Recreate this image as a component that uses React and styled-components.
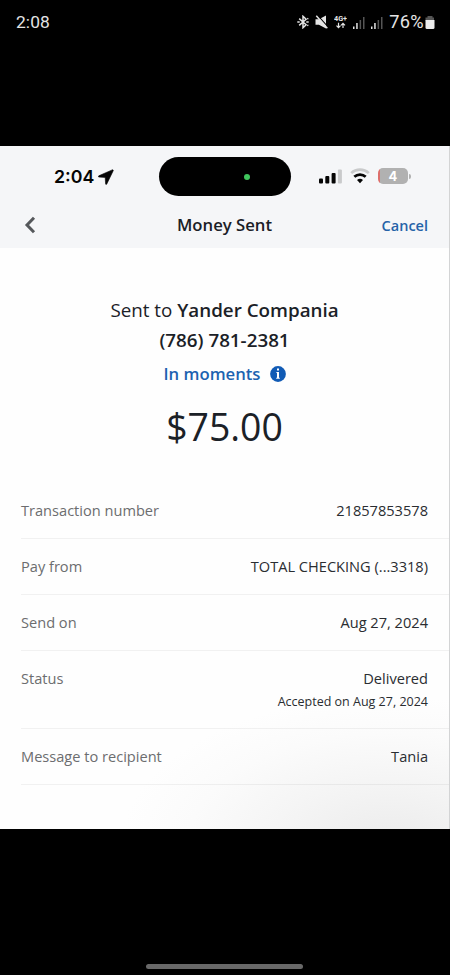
import React from 'react';
import styled, { createGlobalStyle } from 'styled-components';

const GlobalStyle = createGlobalStyle`
  * {
    box-sizing: border-box;
  }

  body {
    margin: 0;
    background: #000;
    font-family: 'Open Sans', 'Noto Sans', sans-serif;
  }
`

const Screen = styled.div`
  display: flex;
  flex-direction: column;
  width: 450px;
  height: 975px;
  overflow: hidden;
  background: #000;
`

const DeviceBar = styled.div`
  display: flex;
  justify-content: space-between;
  height: 146px;
  padding: 11px 15px 0 16px;
  color: #e4e4e4;
  font: 400 17px/22px Roboto, sans-serif;
`

const DeviceIcons = styled.div`
  display: flex;
  align-items: center;
  gap: 6px;
  height: 22px;

  svg {
    display: block;
    flex-shrink: 0;
  }
`

const DeviceTime = styled.span`
  font-size: 17.4px;
  letter-spacing: 0.1px;
`

const DevicePower = styled.div`
  display: flex;
  align-items: center;
  gap: 1px;
  font-size: 18.2px;
  letter-spacing: 0.3px;
`

const Panel = styled.div`
  display: flex;
  flex-direction: column;
  height: 683px;
  border-right: 1px solid #d3d4d5;
  background: radial-gradient(ellipse 270px 150px at 390px 700px, #ebebeb 0%, #f4f4f4 40%, #fbfbfb 75%, #fefefe 100%);
`

const Header = styled.div`
  height: 102px;
  background: #f5f6f8;
`

const PhoneBar = styled.div`
  display: grid;
  grid-template-columns: 159px 132px 1fr;
  padding-top: 11px;
  height: 51px;
`

const PhoneTime = styled.div`
  display: flex;
  align-items: center;
  gap: 4px;
  padding-left: 54px;
  color: #050505;
  font: 600 17.8px/38px Inter, sans-serif;
`

const Island = styled.div`
  display: flex;
  align-items: center;
  height: 39px;
  padding-left: 85px;
  border-radius: 20px;
  background: #000;
`

const CameraDot = styled.span`
  width: 6px;
  height: 6px;
  border-radius: 50%;
  background: #3fc45c;
`

const PhoneIcons = styled.div`
  display: flex;
  align-items: center;
  gap: 8px;
  height: 38px;
  padding-left: 28px;
`

const Battery = styled.div`
  display: flex;
  align-items: center;
`

const BatteryBody = styled.div`
  width: 30px;
  height: 16px;
  border-radius: 5px;
  background: linear-gradient(90deg, #dd6f6b 2px, #b1b1b1 2px);
  color: #fff;
  font: 700 13px/16px Inter, sans-serif;
  text-align: center;
`

const BatteryTip = styled.span`
  width: 2px;
  height: 5px;
  margin-left: 1px;
  border-radius: 0 2px 2px 0;
  background: #b1b1b1;
`

const NavBar = styled.div`
  display: grid;
  grid-template-columns: 1fr auto 1fr;
  align-items: center;
  height: 56px;
  padding: 0 21px 0 24px;
`

const Title = styled.div`
  margin-left: -3px;
  color: #1a2026;
  font-size: 16.7px;
  font-weight: 600;
  line-height: 24px;
`

const Cancel = styled.div`
  color: #2563a8;
  font-size: 14.5px;
  font-weight: 600;
  line-height: 25px;
  text-align: right;
`

const Hero = styled.div`
  display: flex;
  flex-direction: column;
  align-items: center;
  height: 235px;
  padding-top: 46.5px;
  color: #1b2127;
`

const Recipient = styled.div`
  font-size: 18.8px;
  font-weight: ${props => props.$bold ? 600 : 400};
  line-height: 30.5px;

  b {
    font-weight: 600;
  }
`

const Timing = styled.div`
  display: flex;
  align-items: center;
  gap: 9px;
  height: 36px;
  color: #1c62b0;
  font-size: 16.7px;
  font-weight: 600;
`

const Amount = styled.div`
  margin-top: 8.5px;
  font-size: 37.4px;
  line-height: 54px;
`

const Row = styled.div`
  display: flex;
  justify-content: space-between;
  height: ${props => props.$tall ? 78 : 56}px;
  margin-left: 21px;
  padding: 15px 21px 0 0;
  border-bottom: 1px solid rgba(0, 0, 0, 0.05);
  font-size: 14.6px;
  line-height: 24px;
`

const Label = styled.span`
  color: #6c6d6f;
`

const Value = styled.div`
  color: #2a2d31;
  text-align: right;
`

const Note = styled.div`
  font-size: 12.5px;
  line-height: 23px;
`

const HomeArea = styled.div`
  display: flex;
  flex: 1;
  justify-content: center;
  align-items: flex-end;
  padding: 0 1px 6px 0;
`

const HomeBar = styled.span`
  width: 157px;
  height: 5px;
  border-radius: 3px;
  background: #686868;
`

const details = [
  { label: 'Transaction number', value: '21857853578' },
  { label: 'Pay from', value: 'TOTAL CHECKING (...3318)' },
  { label: 'Send on', value: 'Aug 27, 2024' },
  { label: 'Status', value: 'Delivered', note: 'Accepted on Aug 27, 2024' },
  { label: 'Message to recipient', value: 'Tania' },
];

const BluetoothIcon = () => (
  <svg width="12" height="14" viewBox="0 0 12 14" fill="none" stroke="#e4e4e4" strokeWidth="1.5">
    <path d="M2.2 3.6l6.9 6.2L6 12.7V1.3l3.1 2.9-6.9 6.2" />
    <path d="M0.3 7h2.4M9.3 7h2.4M10.3 4l1-.7M10.3 10l1 .7" />
  </svg>
)

const MuteIcon = () => (
  <svg width="13" height="14" viewBox="0 0 13 14">
    <path d="M0.5 4.3h3.4L11 .6v12.8L3.9 9.7H.5z" fill="#e4e4e4" />
    <path d="M2.6 0.4l10.4 11.4" stroke="#000" strokeWidth="1.1" />
    <path d="M1.3 0.8l11 12.4" stroke="#e4e4e4" strokeWidth="1.5" />
  </svg>
)

const NetworkIcon = () => (
  <svg width="13" height="14" viewBox="0 0 13 14">
    <text x="0" y="6.4" fill="#e4e4e4" fontFamily="Roboto" fontSize="7.4" fontWeight="700" textLength="13" lengthAdjust="spacingAndGlyphs">4G+</text>
    <path d="M4.5 7.8v4.7M2.5 10.6l2 2 2-2M9 13V8.3M7 10.3l2-2 2 2" fill="none" stroke="#e4e4e4" strokeWidth="1.2" />
  </svg>
)

const DeviceSignal = () => (
  <svg width="12" height="13" viewBox="0 0 12 13">
    <path d="M0 10.5h1.5V13H0zM3.2 7h1.5v6H3.2z" fill="#e4e4e4" />
    <path d="M6.6 4h1.5v9H6.6zM10 1h1.5v12H10z" fill="#555" />
  </svg>
)

const DeviceBattery = () => (
  <svg width="10" height="13" viewBox="0 0 10 13">
    <path d="M2.5 0h5v1.5H9V5H.5V1.5h2z" fill="#555" />
    <path d="M.5 4h9v7.5a1.5 1.5 0 0 1-1.5 1.5H2A1.5 1.5 0 0 1 .5 11.5z" fill="#ededed" />
  </svg>
)

const LocationIcon = () => (
  <svg width="16" height="16" viewBox="0 0 16 16">
    <path d="M14.2.9L.8 6.8c-.7.4-.5 1.3.2 1.3l6.2.3.4 6.4c0 .8.9.9 1.2.2L15.2 1.8c.3-.7-.3-1.2-1-.9z" fill="#050505" stroke="#050505" strokeWidth="0.6" />
  </svg>
)

const PhoneSignal = () => (
  <svg width="23" height="16" viewBox="0 0 23 16">
    <rect x="0" y="10.5" width="4" height="5" rx="1" fill="#050505" />
    <rect x="6.3" y="8" width="4" height="7.5" rx="1" fill="#050505" />
    <rect x="12.6" y="5" width="4" height="10.5" rx="1" fill="#050505" />
    <rect x="18.9" y="1.5" width="4" height="14" rx="1" fill="#c9cacb" />
  </svg>
)

const WifiIcon = () => (
  <svg width="20" height="16" viewBox="0 0 20 16" fill="none">
    <path d="M1.2 5.1a13 13 0 0 1 17.6 0" stroke="#c9cacb" strokeWidth="2.6" />
    <path d="M4.3 8.7a8.6 8.6 0 0 1 11.4 0" stroke="#050505" strokeWidth="2.8" />
    <path d="M7 12.1a4.6 4.6 0 0 1 6 0L10 15.2z" fill="#050505" />
  </svg>
)

const InfoIcon = () => (
  <svg width="16" height="16" viewBox="0 0 16 16">
    <circle cx="8" cy="8" r="7.9" fill="#115bb5" />
    <path d="M7 2.6h2v2H7zM6.4 6H9v5.7h.8v1.1H6.2v-1.1H7V7.1h-.6z" fill="#fff" />
  </svg>
)

const BackIcon = () => (
  <svg width="12" height="18" viewBox="0 0 12 18">
    <path d="M10 1.7L3 9l7 7.3" fill="none" stroke="#55585b" strokeWidth="3" />
  </svg>
)

const App = () => {
  return (
    <Screen>
      <GlobalStyle />
      <DeviceBar>
        <DeviceTime>2:08</DeviceTime>
        <DeviceIcons>
          <BluetoothIcon />
          <MuteIcon />
          <NetworkIcon />
          <DeviceSignal />
          <DeviceSignal />
          <DevicePower>
            76%
            <DeviceBattery />
          </DevicePower>
        </DeviceIcons>
      </DeviceBar>
      <Panel>
        <Header>
          <PhoneBar>
            <PhoneTime>
              2:04
              <LocationIcon />
            </PhoneTime>
            <Island>
              <CameraDot />
            </Island>
            <PhoneIcons>
              <PhoneSignal />
              <WifiIcon />
              <Battery>
                <BatteryBody>4</BatteryBody>
                <BatteryTip />
              </Battery>
            </PhoneIcons>
          </PhoneBar>
          <NavBar>
            <BackIcon />
            <Title>Money Sent</Title>
            <Cancel>Cancel</Cancel>
          </NavBar>
        </Header>
        <Hero>
          <Recipient>Sent to <b>Yander Compania</b></Recipient>
          <Recipient $bold>(786) 781-2381</Recipient>
          <Timing>
            In moments
            <InfoIcon />
          </Timing>
          <Amount>$75.00</Amount>
        </Hero>
        {details.map(item => (
          <Row key={item.label} $tall={Boolean(item.note)}>
            <Label>{item.label}</Label>
            <Value>
              {item.value}
              {item.note && <Note>{item.note}</Note>}
            </Value>
          </Row>
        ))}
      </Panel>
      <HomeArea>
        <HomeBar />
      </HomeArea>
    </Screen>
  )
};

export default App;
